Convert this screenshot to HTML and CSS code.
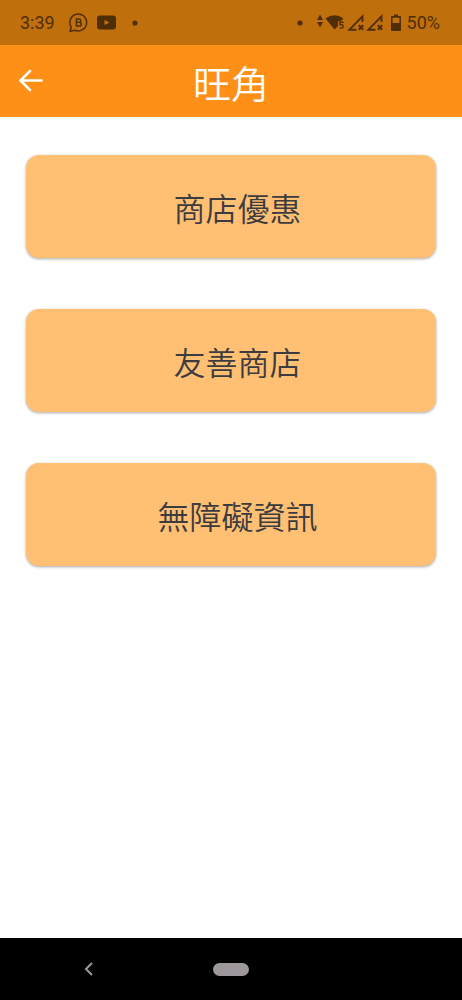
FILE: index.html
```html
<!DOCTYPE html>
<html lang="zh-Hant">
<head>
    <meta charset="UTF-8">
    <meta name="viewport" content="width=device-width, initial-scale=1.0">
    <title>旺角</title>
    <link rel="stylesheet" href="styles.css">
</head>
<body>
    <div class="status-bar">
        <div class="status-left">
            <span>3:39</span>
            <svg width="20" height="20" viewBox="0 0 20 20" fill="none" stroke="currentColor">
                <path d="M1.200 18.200L2.200 14A8.400 8.400 0 1 1 6 17.200Z" stroke-width="1.500"/>
                <path d="M7.400 6v7h3a1.800 1.800 0 0 0 0-3.700h-3h2.700a1.600 1.600 0 0 0 0-3.300z" stroke-width="1.500"/>
            </svg>
            <svg width="20" height="20" viewBox="0 0 20 20" fill="currentColor">
                <path fill-rule="evenodd" d="M3 2.500h13q3 0 3 3v8q0 3-3 3H3q-3 0-3-3V5.500q0-3 3-3zm4.500 4.400v5.200l5-2.600z"/>
            </svg>
            <svg width="20" height="20" viewBox="0 0 20 20" fill="currentColor">
                <circle cx="10" cy="10" r="2.6"/>
            </svg>
        </div>
        <div class="status-right">
            <svg class="dot" width="6" height="20" viewBox="0 0 6 20" fill="currentColor">
                <circle cx="3" cy="10" r="2.6"/>
            </svg>
            <svg width="6" height="20" viewBox="0 0 6 20" fill="currentColor">
                <path d="M3 1.500l3 5.500H0zM3 14.500l3-5.500H0z"/>
            </svg>
            <svg width="20" height="20" viewBox="0 0 20 20">
                <path fill="currentColor" d="M.5 5.400Q9.500 -1 18.500 5.400L15.700 8.200H13V13L9.500 16.500z"/>
                <path fill="none" stroke="currentColor" stroke-width="1.400" d="M18.600 9.200h-3.600v2.500h1.500a1.700 1.700 0 0 1 0 3.400h-2"/>
            </svg>
            <svg width="17" height="20" viewBox="0 0 17 20" fill="none" stroke="currentColor">
                <path d="M15.500 9V3.400L2.400 16.700H9.500" stroke-width="1.900"/>
                <path d="M11.800 12.200l4.400 4.600m0-4.600l-4.400 4.600" stroke-width="2"/>
            </svg>
            <svg width="17" height="20" viewBox="0 0 17 20" fill="none" stroke="currentColor">
                <path d="M15.500 9V3.400L2.400 16.700H9.500" stroke-width="1.900"/>
                <path d="M11.800 12.200l4.400 4.600m0-4.600l-4.400 4.600" stroke-width="2"/>
            </svg>
            <svg class="battery" width="12" height="20" viewBox="0 0 12 20" fill="currentColor">
                <path fill-rule="evenodd" d="M4 1.500h4v1.500h2q1 0 1 1V17q0 1-1 1H2q-1 0-1-1V4q0-1 1-1h2zM2.600 4.700v5.300h6.800v-5.300z"/>
            </svg>
            <span>50%</span>
        </div>
    </div>

    <header class="header">
        <button type="button" class="back-button" aria-label="返回">
            <svg width="26" height="26" viewBox="0 0 26 26" fill="none" stroke="currentColor" stroke-width="2.500" stroke-linecap="round" stroke-linejoin="round">
                <path d="M12 3L2.500 12.500L12 22M2.500 12.500H23.500"/>
            </svg>
        </button>
        <h1>旺角</h1>
    </header>

    <main class="menu">
        <button type="button" class="menu-button">商店優惠</button>
        <button type="button" class="menu-button">友善商店</button>
        <button type="button" class="menu-button">無障礙資訊</button>
    </main>

    <nav class="nav-bar">
        <button type="button" class="nav-back" aria-label="上一頁">
            <svg width="24" height="24" viewBox="0 0 24 24" fill="none" stroke="currentColor" stroke-width="2">
                <path d="M15 6L9 12L15 18"/>
            </svg>
        </button>
        <button type="button" class="nav-home" aria-label="主畫面"></button>
    </nav>
</body>
</html>
```
FILE: styles.css
```css
* {
    box-sizing: border-box;
}

body {
    margin: 0;
    min-height: 100vh;
    display: flex;
    flex-direction: column;
    background-color: #ffffff;
    font-family: Roboto, "Noto Sans CJK TC", sans-serif;
}

button {
    border: none;
    padding: 0;
    font-family: inherit;
    cursor: pointer;
}

svg {
    display: block;
}

/* status bar */
.status-bar {
    display: flex;
    justify-content: space-between;
    align-items: center;
    height: 45px;
    padding: 0 22px 0 20px;
    background-color: #c06f0d;
    color: #4f2e06;
    font-size: 18px;
}

.status-left,
.status-right {
    display: flex;
    align-items: center;
}

.status-left {
    gap: 8px;
}

.status-left span {
    margin-right: 6px;
}

.status-right {
    gap: 2px;
}

.status-right .dot {
    margin-right: 12px;
}

.status-right .battery {
    margin-left: 5px;
    margin-right: 3px;
}

/* title bar */
.header {
    display: grid;
    grid-template-columns: 1fr auto 1fr;
    align-items: center;
    height: 72px;
    padding: 0 18px;
    background-color: #ff9017;
    color: #ffffff;
}

.back-button {
    justify-self: start;
    background: none;
    color: #ffffff;
}

.header h1 {
    margin: 0;
    padding-top: 8px;
    font-size: 38px;
    font-weight: 350;
    line-height: 64px;
}

/* menu */
.menu {
    flex: 1;
    display: flex;
    flex-direction: column;
    gap: 51px;
    padding: 38px 26px;
}

.menu-button {
    height: 103px;
    padding-left: 13px;
    border-radius: 13px;
    background-color: #ffc074;
    color: #3c3c40;
    font-size: 32px;
    font-weight: 350;
    box-shadow: 0 1px 3px rgba(0, 0, 0, 0.35);
}

/* bottom navigation */
.nav-bar {
    display: grid;
    grid-template-columns: 1fr auto 1fr;
    align-items: center;
    height: 62px;
    background-color: #000000;
}

.nav-back {
    justify-self: start;
    margin-left: 36%;
    background: none;
    color: #9c989c;
}

.nav-home {
    width: 36px;
    height: 13px;
    border-radius: 7px;
    background-color: #9c989c;
}
```
